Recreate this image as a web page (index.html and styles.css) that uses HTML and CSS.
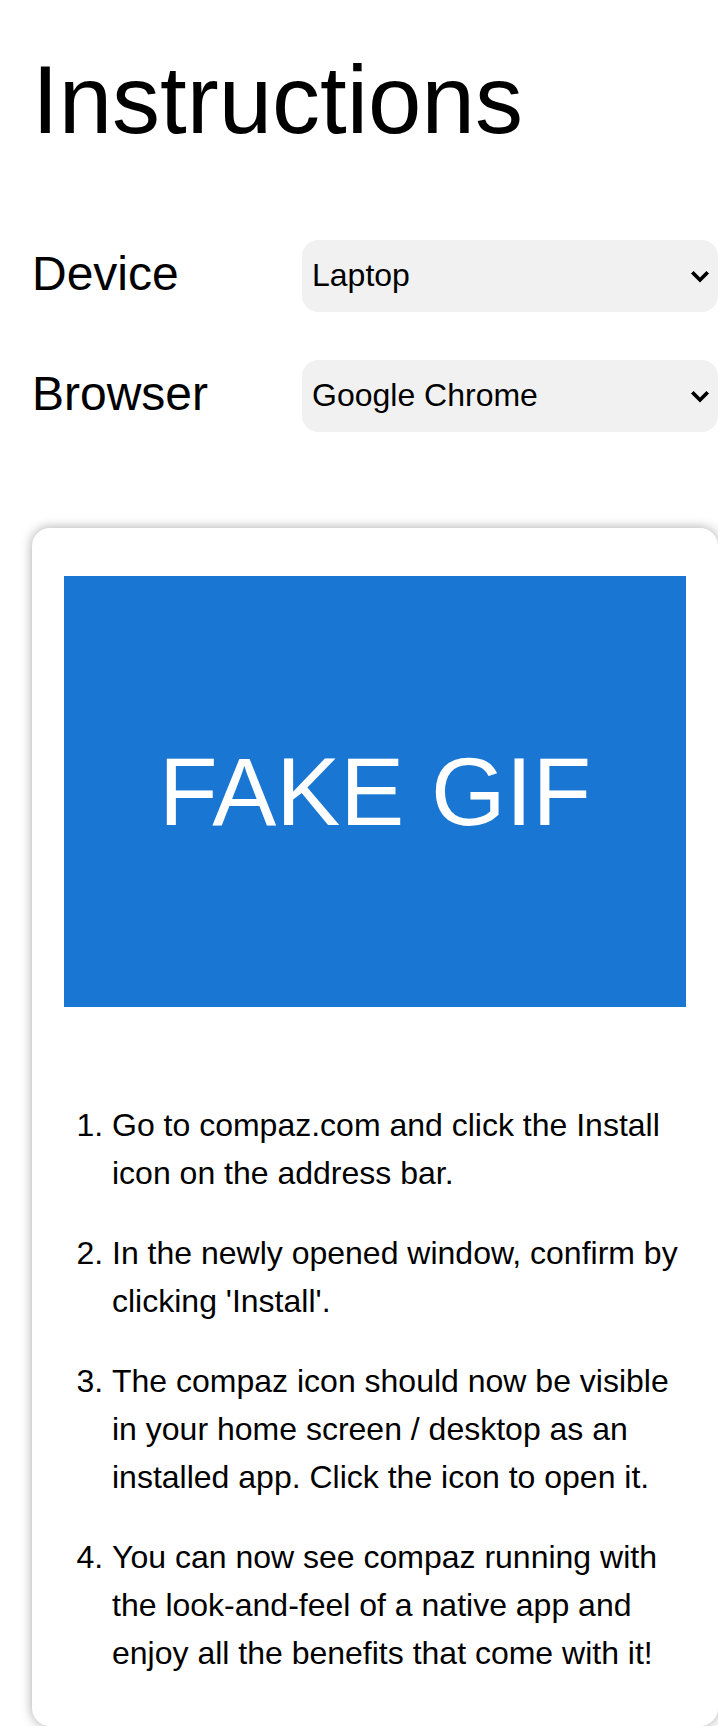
FILE: index.html
```html
<!DOCTYPE html>
<html lang="en">
<head>
<meta charset="utf-8">
<title>Instructions</title>
<link rel="stylesheet" href="styles.css">
</head>
<body>
<main class="page">
  <h1 class="title">Instructions</h1>
  <div class="form">
    <label class="field-label" for="device">Device</label>
    <div class="select-wrap">
      <select id="device" class="field-select">
        <option selected>Laptop</option>
        <option>Phone</option>
        <option>Tablet</option>
      </select>
      <svg class="chevron" width="18" height="12" viewBox="0 0 18 12" aria-hidden="true"><path d="M0 2.6 L2.6 0 L9 6.4 L15.4 0 L18 2.6 L9 11.6 Z" fill="#000"/></svg>
    </div>
    <label class="field-label" for="browser">Browser</label>
    <div class="select-wrap">
      <select id="browser" class="field-select">
        <option selected>Google Chrome</option>
        <option>Microsoft Edge</option>
        <option>Safari</option>
      </select>
      <svg class="chevron" width="18" height="12" viewBox="0 0 18 12" aria-hidden="true"><path d="M0 2.6 L2.6 0 L9 6.4 L15.4 0 L18 2.6 L9 11.6 Z" fill="#000"/></svg>
    </div>
  </div>
  <section class="card">
    <div class="gif">FAKE GIF</div>
    <ol class="steps">
      <li>Go to compaz.com and click the Install icon on the address bar.</li>
      <li>In the newly opened window, confirm by clicking 'Install'.</li>
      <li>The compaz icon should now be visible in your home screen / desktop as an installed app. Click the icon to open it.</li>
      <li>You can now see compaz running with the look-and-feel of a native app and enjoy all the benefits that come with it!</li>
    </ol>
  </section>
</main>
</body>
</html>
```

FILE: styles.css
```css
html, body {
  margin: 0;
  padding: 0;
}

body {
  font-family: "Liberation Sans", Arial, sans-serif;
  color: #000;
  background: #fff;
}

.page {
  padding: 45px 0 0 32px;
}

.title {
  margin: 0;
  font-size: 96px;
  font-weight: 400;
  line-height: normal;
}

.form {
  display: grid;
  grid-template-columns: 270px 1fr;
  row-gap: 48px;
  align-items: center;
  margin-top: 85px;
}

.field-label {
  font-size: 48px;
  padding-bottom: 5px;
}

.select-wrap {
  position: relative;
  height: 72px;
}

.field-select {
  -webkit-appearance: none;
  appearance: none;
  display: block;
  box-sizing: border-box;
  font-family: "Liberation Sans", Arial, sans-serif;
  font-size: 32px;
  color: #000;
  height: 72px;
  width: 100%;
  background-color: #f1f1f1;
  border: 0;
  border-radius: 16px;
  padding: 0 40px 2px 10px;
  margin: 0;
}

.chevron {
  position: absolute;
  right: 9px;
  top: 31px;
  pointer-events: none;
}

.card {
  margin-top: 96px;
  background: #fff;
  border-radius: 18px;
  box-shadow: 0 0 12px rgba(0, 0, 0, 0.35);
  padding: 48px 32px 17px;
}

.gif {
  height: 431px;
  background: #1976d2;
  color: #fff;
  font-size: 96px;
  display: flex;
  align-items: center;
  justify-content: center;
}

.steps {
  margin: 94px 0 0;
  padding-left: 48px;
  font-size: 32px;
  line-height: 1.5;
}

.steps li {
  margin-bottom: 32px;
}
```
